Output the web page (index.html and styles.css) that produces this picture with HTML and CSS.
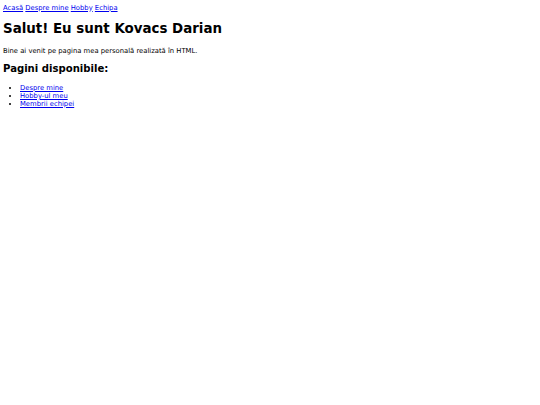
FILE: index.html
```html
<!DOCTYPE html>
<html lang="ro">
<head>
<meta charset="utf-8">
<title>Kovacs Darian</title>
<link rel="stylesheet" href="styles.css">
</head>
<body>
<nav class="nav">
<a href="#">Acasă</a>
<a href="#">Despre mine</a>
<a href="#">Hobby</a>
<a href="#">Echipa</a>
</nav>
<h1 class="title">Salut! Eu sunt Kovacs Darian</h1>
<p class="intro">Bine ai venit pe pagina mea personală realizată în HTML.</p>
<h2 class="subtitle">Pagini disponibile:</h2>
<ul class="pages">
<li><a href="#">Despre mine</a></li>
<li><a href="#">Hobby-ul meu</a></li>
<li><a href="#">Membrii echipei</a></li>
</ul>
</body>
</html>
```
FILE: styles.css
```css
html {
  background: #fff;
}
body {
  margin: 3px;
  font-family: "DejaVu Sans", sans-serif;
  font-size: 6.8px;
  line-height: 8px;
  color: #000;
}
a {
  color: #0000ee;
}
.nav {
  padding-top: 0.5px;
}
.title {
  font-size: 13.4px;
  line-height: 16px;
  margin: 9.5px 0;
}
.intro {
  margin: 7px 0;
}
.subtitle {
  font-size: 10.1px;
  line-height: 12px;
  margin: 8.7px 0;
}
.pages {
  margin: 7px 0;
  padding-left: 17px;
}
```
